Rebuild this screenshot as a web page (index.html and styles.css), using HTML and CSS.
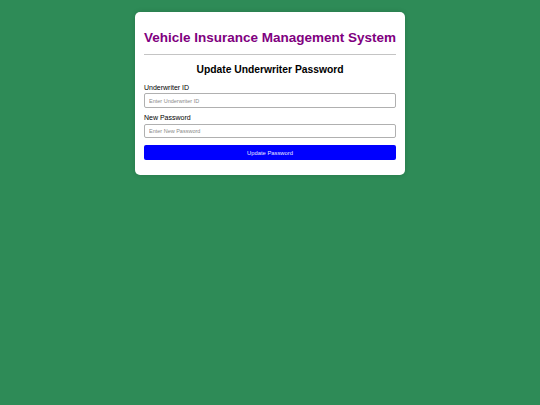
FILE: index.html
```html
<!DOCTYPE html>
<html lang="en">
<head>
<meta charset="utf-8">
<title>Update Underwriter Password</title>
<link rel="stylesheet" href="styles.css">
</head>
<body>
<div class="card">
  <h1 class="title">Vehicle Insurance Management System</h1>
  <hr class="rule">
  <h2 class="subtitle">Update Underwriter Password</h2>
  <form class="form">
    <label class="label" for="uid">Underwriter ID</label>
    <input class="input" id="uid" type="text" placeholder="Enter Underwriter ID">
    <label class="label" for="pwd">New Password</label>
    <input class="input" id="pwd" type="password" placeholder="Enter New Password">
    <button class="button" type="button">Update Password</button>
  </form>
</div>
</body>
</html>
```
FILE: styles.css
```css
html, body {
  margin: 0;
  padding: 0;
}
body {
  background: #2e8b57;
  font-family: "Liberation Sans", Arial, sans-serif;
  width: 540px;
  height: 405px;
  overflow: hidden;
}
.card {
  box-sizing: border-box;
  width: 270px;
  margin: 12px auto 0;
  background: #ffffff;
  border-radius: 5px;
  padding: 9px 9px 9px;
  box-shadow: 0 0 5px rgba(0,0,0,0.15);
}
.title {
  margin: 8.5px 0 9px;
  font-size: 13.5px;
  font-weight: bold;
  color: #800080;
  text-align: center;
  white-space: nowrap;
}
.rule {
  margin: 0;
  border: 0;
  border-top: 1px solid #c4c4c4;
  height: 0;
}
.subtitle {
  margin: 9px 0 9px;
  font-size: 10.3px;
  font-weight: bold;
  color: #000;
  text-align: center;
}
.form {
  display: flex;
  flex-direction: column;
  margin: 0;
}
.label {
  font-size: 7px;
  line-height: 8.3px;
  color: #000;
  margin-bottom: 1.6px;
}
.input {
  box-sizing: border-box;
  height: 14.6px;
  margin: 0 0 6px;
  padding: 0 4px;
  border: 1px solid #b0b0b0;
  border-radius: 2px;
  font-family: "Liberation Sans", Arial, sans-serif;
  font-size: 5.5px;
  color: #000;
  width: 100%;
}
.input::placeholder {
  color: #8a8a8a;
}
.button {
  box-sizing: border-box;
  margin: 1px 0 6px;
  height: 14.6px;
  width: 100%;
  border: 0;
  border-radius: 2px;
  background: #0000ff;
  color: #e8e8ff;
  font-family: "Liberation Sans", Arial, sans-serif;
  font-size: 5.8px;
  padding: 0;
}
```
